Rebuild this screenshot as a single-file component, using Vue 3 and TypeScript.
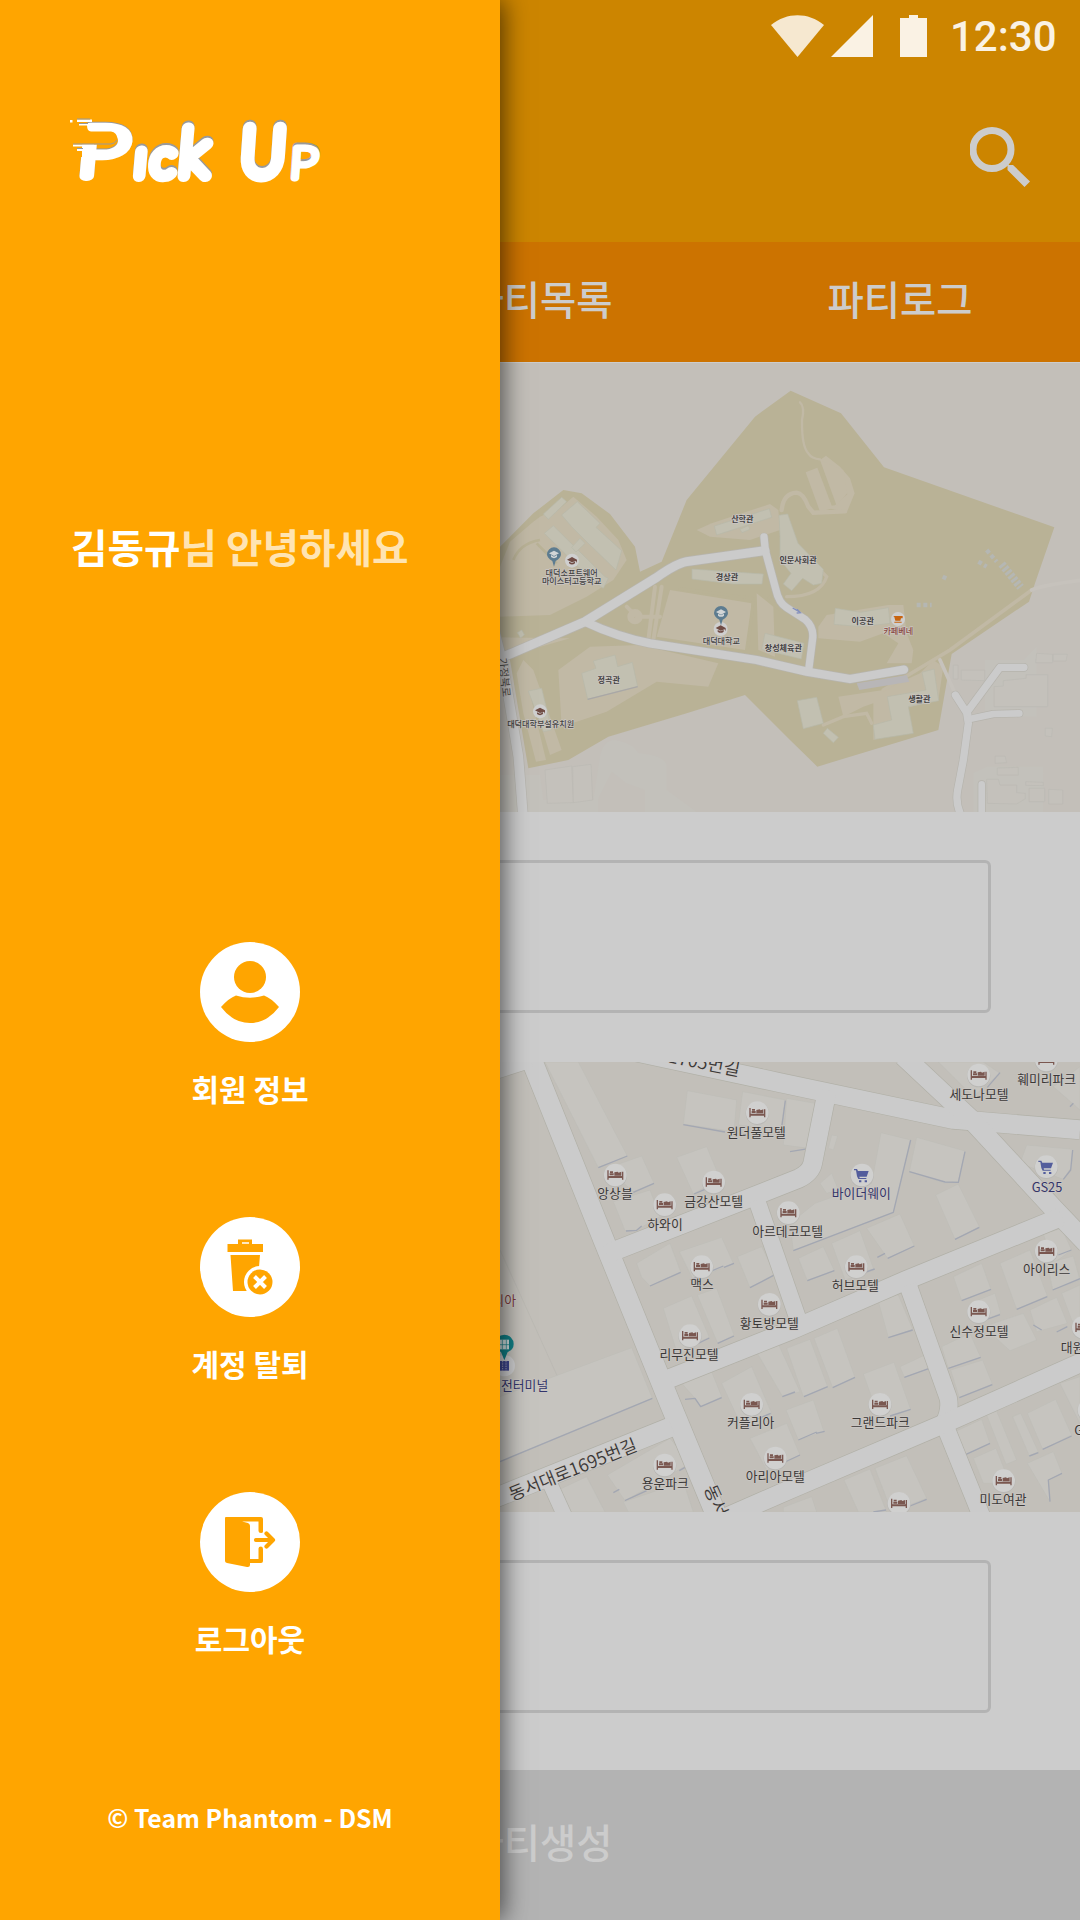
<script setup lang="ts">
interface Label { x: number; y: number; t: string; c?: string; s?: number; r?: number; w?: number }
interface Marker { x: number; y: number; kind: string }

const campusBuildings: string[] = [
  '160,462 215,412 230,425 175,478', '215,465 262,425 330,490 318,502 395,572 378,630 300,555 245,500',
  '163,520 190,497 345,650 355,655 340,685 310,665', '245,562 270,535 285,550 258,576',
  '673,498 838,446 845,472 680,525', '750,508 775,497 780,508 756,518',
  '606,627 820,642 816,672 730,672 606,657', '867,466 893,462 924,550 1000,628 995,670 970,675 938,655 905,692 880,672 903,640 870,600 870,530',
  '1036,745 1112,757 1195,743 1200,790 1115,800 1032,793', '825,820 942,850 934,897 815,868',
  '275,940 318,925 310,903 375,885 383,920 427,907 443,980 293,1018',
  '115,993 155,985 185,1110 160,1115', '1296,937 1332,927 1346,1022 1255,1040 1270,1120 1155,1138 1150,1095 1205,1080 1192,1010 1308,990',
  '922,1022 980,1012 1000,1090 940,1106', '1012,1105 1045,1132 1030,1148 1000,1120', '82,818 95,810 103,824 92,834'
]
const faintBuildings: string[] = [
  '165,1230 245,1218 250,1328 172,1330', '248,1220 303,1213 308,1320 250,1328',
  '1512,980 1540,978 1540,962 1608,955 1608,944 1673,944 1673,1040 1512,1040',
  '1640,880 1688,883 1688,908 1637,908', '1690,883 1732,883 1728,903 1690,903', '1414,930 1484,930 1484,962 1414,960',
  '1490,1258 1525,1258 1530,1275 1580,1275 1580,1298 1606,1300 1606,1316 1580,1332 1492,1330',
  '1617,1285 1664,1285 1664,1325 1617,1325', '1676,1288 1718,1290 1718,1332 1676,1332', '1522,1224 1585,1222 1585,1245 1522,1245',
  '1515,1188 1545,1188 1550,1208 1515,1210', '1607,1265 1660,1267 1660,1277 1607,1276', '1390,915 1404,915 1404,957 1390,957',
  '1666,1105 1687,1105 1685,1130 1666,1128'
]
const campusLabels: Label[] = [
  { x: 245, y: 647, t: '대덕소프트웨어' }, { x: 245, y: 672, t: '마이스터고등학교' }, { x: 694, y: 851, t: '대덕대학교' },
  { x: 152, y: 1101, t: '대덕대학부설유치원' }, { x: 757, y: 486, t: '산학관', w: 700 }, { x: 711, y: 661, t: '경상관', w: 700 },
  { x: 924, y: 609, t: '인문사회관', w: 700 }, { x: 880, y: 872, t: '창성체육관', w: 700 }, { x: 356, y: 968, t: '정곡관', w: 700 },
  { x: 1118, y: 792, t: '이공관', w: 700 }, { x: 1288, y: 1027, t: '생활관', w: 700 }, { x: 1225, y: 822, t: '카페베네', c: '#8b4a42' },
  { x: 42, y: 962, t: '가정북로', r: 84, s: 32, w: 400, c: '#565451' }
]
const campusMarkers: Marker[] = [
  { x: 246, y: 602, kind: 'cap' }, { x: 692, y: 807, kind: 'cap' }, { x: 150, y: 1054, kind: 'cap' }, { x: 1224, y: 777, kind: 'cup' }
]
const campusRoads: { d: string; w: number }[] = [
  { d: 'M-40 925L285 785L500 652Q560 610 590 605L825 572', w: 27 },
  { d: 'M822 531L826 572L858 690Q866 728 890 743L945 778Q972 802 968 835L956 930', w: 22 },
  { d: 'M285 785Q380 830 480 850L800 900L950 935L1080 957L1242 929', w: 25 },
  { d: 'M10 800L40 920L85 1190L100 1380', w: 29 },
  { d: 'M1396 1005L1433 1063M1602 922L1530 922L1430 1058L1435 1090L1420 1200L1403 1290Q1395 1330 1415 1370', w: 22 },
  { d: 'M1588 1060L1510 1062L1435 1078M1475 1273V1370', w: 20 }
]

const townRoads: { d: string; w: number }[] = [
  { d: 'M105 -20L344 577L540 1060L685 1410', w: 62 }, { d: 'M-60 80L120 22', w: 62 },
  { d: 'M440 6L870 98L1390 208L1770 239', w: 57 }, { d: 'M1240 18L1445 210L1690 475L1790 580', w: 58 },
  { d: 'M1012 120L968 340Q962 368 925 386L350 612', w: 56 }, { d: 'M800 450L925 810', w: 50 },
  { d: 'M540 985L900 842L1250 690L1715 500', w: 56 }, { d: 'M1254 705L1375 1045Q1382 1080 1362 1120L1475 1400', w: 52 },
  { d: 'M690 1410L900 1318L1360 1122L1790 930', w: 56 }, { d: 'M545 1130L-30 1362', w: 58 }, { d: 'M175 1290L225 1400', w: 44 }
]
const townBuildings: { p: string; s?: string }[] = [
  { p: '165,36 265,36 412,318 325,353', s: '325,353 412,318' }, { p: '350,355 455,318 492,400 430,425', s: '430,427 492,400' },
  { p: '592,122 740,150 732,245 580,222', s: '580,224 705,246' }, { p: '758,125 886,150 872,240 745,225', s: '886,152 876,225' },
  { p: '560,322 650,290 690,385 610,432', s: '612,432 650,416' }, { p: '370,455 480,420 510,500 440,540 405,542', s: '408,543 440,541 455,528' },
  { p: '440,640 540,580 572,665 480,708 455,682', s: '480,708 572,667' }, { p: '568,605 695,562 730,640 610,690', s: '600,690 700,648 M 702,652 732,640' },
  { p: '742,620 815,590 855,672 780,713', s: '780,713 855,674' }, { p: '520,775 605,738 658,862 560,905', s: '612,886 658,864' },
  { p: '622,735 680,715 732,855 683,880', s: '683,880 732,858' }, { p: '575,1000 665,965 695,1040 632,1070 615,1045', s: '585,1048 615,1045 632,1070 695,1043' },
  { p: '695,1000 785,950 845,1090 760,1140', s: '800,1108 842,1090' }, { p: '802,910 865,882 930,1025 878,1040', s: '877,1040 915,1026' },
  { p: '780,1165 890,1120 930,1215 830,1260', s: '885,1236 930,1215' }, { p: '205,1320 290,1280 345,1386 235,1386' },
  { p: '352,1275 540,1165 600,1240 405,1352', s: '405,1352 470,1322 M 370,1328 388,1318 M 568,1262 585,1252' },
  { p: '400,1356 580,1295 610,1386 415,1386' }, { p: '30,1040 425,893 487,1045 30,1235', s: '30,1235 487,1045' },
  { p: '890,895 960,868 1013,1010 940,1040', s: '942,1040 1013,1010' }, { p: '972,865 1042,835 1095,982 1028,1013', s: '1028,1013 1095,982' },
  { p: '888,1080 970,1050 1002,1145 925,1170', s: '925,1170 980,1146 M 978,1150 1004,1144' },
  { p: '1160,735 1225,735 1268,838 1195,863', s: '1195,863 1268,840' }, { p: '1120,972 1212,937 1262,1078 1170,1112', s: '1200,1098 1262,1078' },
  { p: '1230,950 1305,915 1318,955 1243,982', s: '1243,982 1318,955' }, { p: '1173,248 1262,270 1210,487 910,602 900,520 975,460 1145,400', s: '1262,270 1210,487 910,602' },
  { p: '1280,262 1425,303 1405,395 1365,400 1258,365', s: '1258,365 1365,396 1405,397 1425,305' },
  { p: '1337,435 1405,402 1468,530 1395,568', s: '1395,568 1468,532' }, { p: '1130,535 1230,492 1273,588 1193,625', s: '1193,625 1273,588 M 1162,622 1185,610' },
  { p: '1025,580 1110,542 1152,660 1065,690', s: '1128,666 1154,657' }, { p: '925,625 1000,590 1033,662 952,692', s: '952,692 1033,662' },
  { p: '990,400 1025,370 1045,420 1010,430' }, { p: '1025,255 1043,258 1030,300 1015,295' }, { p: '890,145 975,160 960,295 880,285', s: '975,165 960,295 900,305' },
  { p: '1345,36 1480,36 1530,70 1450,140', s: '1530,68 1492,112' }, { p: '1690,110 1770,50 1770,180', s: '1740,170 1750,160' },
  { p: '1610,285 1748,298 1745,350 1720,388 1590,340', s: '1748,300 1742,360 1720,388' },
  { p: '1660,552 1715,535 1745,600 1690,640', s: '1705,615 1744,600' }, { p: '1530,640 1620,600 1672,738 1580,778', s: '1580,778 1672,740' },
  { p: '1390,680 1475,640 1503,718 1415,752', s: '1415,752 1503,718' }, { p: '1672,640 1750,618 1770,690 1688,720', s: '1688,720 1770,686' },
  { p: '1440,760 1515,730 1532,790 1460,820', s: '1490,808 1530,794' }, { p: '1620,780 1700,742 1732,820 1640,845', s: '1700,846 1732,830 M 1630,825 1655,840' },
  { p: '1715,730 1770,705 1770,840 1745,810' }, { p: '1480,830 1600,790 1640,870 1560,902' }, { p: '1355,890 1440,850 1472,922 1375,955', s: '1375,955 1472,922' },
  { p: '1382,960 1478,930 1507,1002 1408,1043', s: '1408,1043 1507,1004' }, { p: '1395,1145 1475,1108 1500,1180 1420,1217', s: '1420,1217 1500,1180' },
  { p: '1490,1095 1520,1083 1580,1230 1548,1243' }, { p: '1568,1100 1592,1090 1645,1205 1618,1218', s: '1618,1218 1645,1208' },
  { p: '1612,1090 1697,1048 1745,1155 1658,1198', s: '1658,1198 1745,1158' }, { p: '1710,1000 1770,980 1770,1120' },
  { p: '1612,1240 1690,1205 1716,1270 1675,1290 1680,1355', s: '1716,1270 1675,1290 1680,1355' }, { p: '1450,1225 1518,1195 1560,1300 1480,1300' },
  { p: '1155,1255 1250,1217 1310,1345 1205,1386', s: '1260,1368 1310,1348' }, { p: '1062,1290 1140,1257 1190,1386 1105,1386', s: '1150,1386 1188,1380' }, { p: '880,1372 965,1340 980,1386 880,1386' }
]
const townLabels: Label[] = [
  { x: 799, y: 262, t: '원더풀모텔' }, { x: 375, y: 445, t: '앙상블' }, { x: 671, y: 469, t: '금강산모텔' }, { x: 525, y: 538, t: '하와이' },
  { x: 893, y: 558, t: '아르데코모텔' }, { x: 636, y: 718, t: '맥스' }, { x: 838, y: 833, t: '황토방모텔' }, { x: 597, y: 926, t: '리무진모텔' },
  { x: 782, y: 1132, t: '커플리아' }, { x: 856, y: 1292, t: '아리아모텔' }, { x: 526, y: 1315, t: '용운파크' }, { x: 1467, y: 148, t: '세도나모텔' },
  { x: 1670, y: 102, t: '훼미리파크' }, { x: 1114, y: 445, t: '바이더웨이', c: '#33356a' }, { x: 1671, y: 425, t: 'GS25', c: '#33356a' },
  { x: 1096, y: 719, t: '허브모텔' }, { x: 1670, y: 673, t: '아이리스' }, { x: 1467, y: 859, t: '신수정모텔' }, { x: 1783, y: 905, t: '대원모텔' },
  { x: 1171, y: 1132, t: '그랜드파크' }, { x: 1539, y: 1361, t: '미도여관' }, { x: 1799, y: 1155, t: 'GS25' },
  { x: 7, y: 765, t: '롯데리아', c: '#7a3a3a' }, { x: 86, y: 1019, t: '대전터미널', c: '#33356a' },
  { x: 252, y: 1277, t: '동서대로1695번길', r: -22, s: 53, w: 350 }, { x: 544, y: 39, t: '동서대로1705번길', r: 11, s: 54, w: 350 }, { x: 690, y: 1410, t: '동서대로', r: 66, s: 53, w: 350 }
]
const townMarkers: Marker[] = [
  ...[[802, 188], [376, 375], [671, 396], [524, 464], [895, 488], [635, 650], [838, 763], [600, 857], [785, 1063], [856, 1224], [524, 1245],
    [1466, 75], [1669, 30], [1099, 650], [1669, 603], [1466, 785], [1780, 832], [1170, 1063], [1541, 1292], [1227, 1360]
  ].map(([x, y]) => ({ x, y, kind: 'bed' })),
  { x: 1116, y: 375, kind: 'cart' }, { x: 1669, y: 350, kind: 'cart' }, { x: 1797, y: 1080, kind: 'cart' }
]
const rotation = (l: Label) => (l.r ? `rotate(${l.r} ${l.x} ${l.y - 10})` : undefined)
</script>

<template>
  <div class="phone">
    <main class="screen">
      <header class="top">
        <div class="status">
          <svg class="wifi" viewBox="0 0 53 42"><path d="M0 10C16-3 37-3 53 10L26.500 42Z" fill="#f6e8d0" /></svg>
          <svg class="signal" viewBox="0 0 42 42"><path d="M42 0V42H0Z" fill="#faf2e4" /></svg>
          <svg class="battery" viewBox="0 0 27 42"><path d="M0 3H9V0H18V3H27V42H0Z" fill="#faf2e4" /></svg>
          <span class="time">12:30</span>
        </div>
        <svg class="search" viewBox="0 0 60 60">
          <circle cx="22" cy="22.500" r="19" fill="none" stroke="#ccc" stroke-width="7" />
          <path d="M37.500 38V43L54.500 60L60 54.500L43 38H39L36 35L33.500 37.500Z" fill="#ccc" />
        </svg>
      </header>
      <nav class="tabs"><span>파티생성</span><span>파티목록</span><span>파티로그</span></nav>

      <svg class="map campus" viewBox="-1470 9 3240 1347">
        <rect x="-1470" y="0" width="3240" height="1360" fill="#c3bfb9" />
        <g fill="#c3c1bb">
          <path d="M330 1190Q340 1140 375 1140Q430 1150 445 1180Q520 1185 530 1215V1290L620 1356H465V1290L410 1270L365 1235L325 1315V1356H30V1245H150L160 1320H310Z" />
          <path d="M1450 1240L1490 1220H1660V1356H1450ZM1484 900L1600 900L1640 860V1070H1484Z" />
        </g>
        <path d="M30 560L130 460L220 390L275 400L360 462L435 560L450 635L515 605L590 420L795 170L902 92L1053 160L1182 322L1693 502L1635 670L1617 725L1385 882L1345 1110L982 1220L900 1140L765 1005L590 1060L355 1130L235 1200L115 1225L60 900L0 840V590Z" fill="#b9b296" />
        <g fill="#c1b9a5">
          <path d="M30 620V770L180 765L290 710L370 660L410 600L385 540L320 470L250 410L215 440L150 470L130 485L60 545Z" />
          <path d="M205 930L300 860L450 855L685 910L655 980L500 965L350 1055L215 1100Z" />
          <path d="M100 900L130 930L180 1070L215 1170L180 1185L140 1050L120 1000L168 1200L138 1205L100 1060L80 940ZM30 832L240 835L100 875L30 870Z" />
          <path d="M540 690L785 730L765 870L500 830ZM800 700L850 740L855 890L805 870Z" />
          <path d="M620 510L660 530L780 540L870 510L865 450L840 432L665 490Z" />
          <path d="M990 300L1008 287L1050 320L1080 355L1094 400L1070 458L1000 440L1035 436L1072 402Z" />
          <path d="M947 337L982 323L1028 445L990 455Z" />
          <path d="M985 800L1010 765L1195 735L1240 735L1250 820L1270 870L1265 910H1190L1225 850L1180 820L1110 845L985 835Z" />
          <path d="M1045 1010L1180 990L1290 940L1330 900L1360 920L1345 1020L1245 1045L1250 1110L1150 1140V1030L1120 1040L1060 1070Z" />
          <path d="M990 300L1040 437L1072 400L1060 330Z" />
        </g>
        <g fill="none" stroke="#c1b9a5" stroke-linecap="round">
          <path d="M930 127Q945 140 936 180Q935 260 955 280Q965 296 990 298" stroke-width="7" />
          <path d="M875 450Q880 400 920 398Q940 400 955 440L970 458L1065 454" stroke-width="13" />
          <path d="M1180 990L1380 870L1625 690" stroke-width="11" /><path d="M1625 690Q1660 675 1780 660M1350 900L1395 1000" stroke-width="11" stroke="#c6c2bc" />
          <path d="M495 680L475 840M515 680L490 840M410 740L440 770H510" stroke-width="12" /><circle cx="435" cy="770" r="13" stroke-width="20" />
          <path d="M1000 1095L1060 1070L1130 1060L1145 1090M890 710Q990 710 1010 650L990 630" stroke-width="10" />
        </g>
        <path d="M70 600Q90 550 150 540M140 550L200 610M565 685L790 715L775 865M835 710L870 750" fill="none" stroke="#b9b296" stroke-width="8" />
        <path d="M1100 970L1250 945L1258 965L1108 990Z" fill="#b8b6b7" />
        <g fill="#c2c0b1" stroke="#b7b8a9" stroke-width="2"><polygon v-for="p in campusBuildings" :key="p" :points="p" /></g>
        <path d="M293 1018L443 980" stroke="#a9a7a6" stroke-width="4" />
        <g fill="#c4c1bb" stroke="#bbbab4" stroke-width="2"><polygon v-for="p in faintBuildings" :key="p" :points="p" /></g>
        <g fill="none" stroke="#b5b7b3" stroke-width="13"><path d="M1535 612L1592 682" stroke-dasharray="9 5" stroke-width="24" /><path d="M1490 570L1520 605M1465 605L1490 620M1280 735H1325M1358 650L1370 656" stroke-dasharray="12 8" /></g>
        <g fill="none" stroke-linecap="round" stroke-linejoin="round">
          <path v-for="r in campusRoads" :key="'c' + r.d" :d="r.d" stroke="#b6b4ad" :stroke-width="r.w + 4" />
          <path v-for="r in campusRoads" :key="r.d" :d="r.d" stroke="#cbcbcb" :stroke-width="r.w" />
        </g>
        <path d="M908 744L926 754M921 748L931 758L920 759" stroke="#8490bd" stroke-width="4" fill="none" />
        <g v-for="m in campusMarkers" :key="m.x" :transform="`translate(${m.x} ${m.y})`">
          <circle r="21" fill="#cfcfcf" />
          <path v-if="m.kind === 'cap'" d="M-15-3L0-11L15-3V7L12 1L0 5L-15-3ZM-9 3L0 7L9 3V8Q0 15-9 8Z" fill="#704c45" />
          <path v-else d="M-14-9H14V-2H9L7 5H-8L-11-6ZM-11 8H11V11H-11Z" fill="#c8640f" />
        </g>
        <g v-for="p in [[192, 584], [693, 760]]" :key="p[0]" :transform="`translate(${p[0]} ${p[1]})`">
          <path d="M0 36L-5 19Q-21 10-21-1A21 21 0 1 1 21-1Q21 10 5 19Z" fill="#5d7c90" />
          <path d="M-15-4L0-12L15-4L0 4ZM-9 1L0 6L9 1V7Q0 14-9 7Z" fill="#d2d5d6" />
        </g>
        <g class="place">
          <text v-for="l in campusLabels" :key="l.t" :x="l.x" :y="l.y" :font-size="l.s ?? 24.300" :font-weight="l.w ?? 500" :fill="l.c ?? '#444342'" :transform="rotation(l)">{{ l.t }}</text>
        </g>
      </svg>

      <div class="field"></div>

      <svg class="map town" viewBox="-1470 36 3240 1350">
        <rect x="-1470" y="36" width="3240" height="1350" fill="#c2bfb9" />
        <path d="M30 600L205 985L425 895" fill="none" stroke="#b8b6b0" stroke-width="2" />
        <g v-for="b in townBuildings" :key="b.p" stroke-linejoin="round">
          <polygon :points="b.p" fill="#c6c4bf" stroke="#bdbcb7" stroke-width="1.500" />
          <path v-if="b.s" :d="'M' + b.s" fill="none" stroke="#a3a7b2" stroke-width="4" />
        </g>
        <g fill="none" stroke-linejoin="round">
          <path v-for="r in townRoads" :key="'c' + r.d" :d="r.d" stroke="#b1b0a7" :stroke-width="r.w + 4" />
          <path v-for="r in townRoads" :key="r.d" :d="r.d" stroke="#cbcbcb" :stroke-width="r.w" />
        </g>
        <g v-for="m in townMarkers" :key="`${m.x}-${m.y}`" :transform="`translate(${m.x} ${m.y})`">
          <circle cy="2" r="35" fill="#b8b7b4" /><circle r="34" fill="#d0d0cf" />
          <path v-if="m.kind === 'bed'" d="M-24-14H-20V3H20V-10H24V14H20V9H-20V14H-24ZM-17-5H-5V1H-17ZM-16-11H-7V-6H-16ZM-3-8L7-10L10-7L18-10V2H-3Z" fill="#7a5750" />
          <path v-else d="M-24-18H-15L-12-12H20L14 5H-8L-7 9H13V12H-11L-15 4L-18-14H-24ZM-9 16h7v6h-7ZM8 16h7v6H8Z" fill="#535d9c" />
        </g>
        <circle cx="43" cy="947" r="32" fill="#cfcfd0" />
        <path d="M29 933H57V962H29Z" fill="#3f4690" /><path d="M38 933V962M48 933V962" stroke="#cfcfd0" stroke-width="2" stroke-dasharray="4 3" />
        <path d="M43 931L33 906Q15 899 15 882A28 28 0 1 1 71 882Q71 899 53 906Z" fill="#118087" />
        <path d="M29 869H57V898H29Z" fill="#d0dede" /><path d="M37 869V898M49 869V898M29 884H57" stroke="#118087" stroke-width="2" />
        <g class="place">
          <text v-for="l in townLabels" :key="l.t + l.x" :x="l.x" :y="l.y" :font-size="l.s ?? 38.500" :font-weight="l.w ?? 400" :fill="l.c ?? '#3a3837'" :transform="rotation(l)">{{ l.t }}</text>
        </g>
      </svg>

      <div class="field"></div>
      <footer class="create">파티생성</footer>
    </main>

    <aside class="drawer">
      <svg class="logo" viewBox="0 0 260 74" aria-label="Pick Up">
        <g class="mark">
          <g v-for="(c, i) in ['#999', '#fff']" :key="c" :fill="c" :stroke="c" :transform="i ? 'translate(0 .5)' : 'translate(0 -.8)'">
            <text transform="translate(5.500 58.500) skewX(-5) scale(1.340 1)" font-size="69" stroke-width="10">P</text>
            <text transform="translate(64 58) skewX(-5)" font-size="50" stroke-width="12">ı</text>
            <text transform="translate(80 58) skewX(-5)" font-size="50" stroke-width="12">c</text>
            <text transform="translate(107.500 58) skewX(-5)" font-size="66" stroke-width="12">k</text>
            <text transform="translate(169.500 57) skewX(-4) scale(.930 1)" font-size="66" stroke-width="14">U</text>
            <text transform="translate(219 60) skewX(-4) scale(1.150 1)" font-size="43" stroke-width="7">P</text>
          </g>
        </g>
        <path d="M0 0H14V8H17Q17 14.500 21 14.500H41Q47 15.500 47 21Q47 26.500 41 27.500H0Z" fill="#ffa500" />
        <path d="M0 27.500H12V40H0Z" fill="#ffa500" />
        <path d="M7 2.500H22V5H7ZM9 7H20V8.500H9ZM3 27.500H24V29.500H3ZM7 32H16V34H7ZM0 3H2.500V5.500H0Z" fill="#fff" />
        <path d="M7 2H20M9 6.500H18M3 27H41Q45 26.500 47 23M7 31.500H13" fill="none" stroke="#999" stroke-width="1" />
      </svg>

      <p class="greeting"><b>김동규</b><span>님 안녕하세요</span></p>

      <ul class="menu">
        <li>
          <svg viewBox="0 0 100 100"><circle cx="50" cy="50" r="50" fill="#fff" /><circle cx="50" cy="35" r="16" fill="#ffa500" />
            <path d="M36 53.500Q50 58 64 53.500Q71 56 79 65Q67 81 50 81Q33 81 21 65Q29 56 36 53.500Z" fill="#ffa500" /></svg>
          <span>회원 정보</span>
        </li>
        <li>
          <svg viewBox="0 0 100 100"><circle cx="50" cy="50" r="50" fill="#fff" />
            <path d="M27.500 27H38V22.500H52V27H63V35H27.500ZM30.500 38H60L57 74H33Z" fill="#ffa500" /><path d="M42 26H49" stroke="#fff" stroke-width="1.500" />
            <circle cx="60" cy="65" r="16" fill="#fff" /><circle cx="60" cy="65" r="12.500" fill="#ffa500" />
            <path d="M54.500 59.500L65.500 70.500M65.500 59.500L54.500 70.500" stroke="#fff" stroke-width="4" /></svg>
          <span>계정 탈퇴</span>
        </li>
        <li>
          <svg viewBox="0 0 100 100"><circle cx="50" cy="50" r="50" fill="#fff" />
            <path d="M26 25H61Q63 25 63 27V39.500Q63 41 61 41Q58.500 41 58.500 39V29.500H42L48 31Q50 32 50 34V67H58.500V56.500Q58.500 54.500 61 54.500Q63 54.500 63 57V69Q63 71 61 71H50V73Q50 75.500 47 75L27 71Q25 70.500 25 69V26Q25 25 26 25Z" fill="#ffa500" />
            <path d="M56 48H73M66.500 41.500L73 48L66.500 54.500" fill="none" stroke="#ffa500" stroke-width="4.200" stroke-linecap="round" stroke-linejoin="round" /></svg>
          <span>로그아웃</span>
        </li>
      </ul>
      <p class="copy">© Team Phantom - DSM</p>
    </aside>
  </div>
</template>

<style scoped>
.phone { position: relative; width: 1080px; height: 1920px; overflow: hidden; background: #ccc; font-family: "Noto Sans CJK KR", sans-serif; }
.screen { display: flex; flex-direction: column; height: 1920px; }
.top { display: flex; flex-direction: column; align-items: flex-end; height: 242px; background: #cc8500; }
.status { display: flex; align-items: flex-start; height: 57px; padding: 15px 25px 0 0; box-sizing: border-box; }
.wifi { width: 53px; height: 42px; }
.signal { width: 42px; height: 42px; margin-left: 7px; }
.battery { width: 27px; height: 42px; margin-left: 27px; }
.time { width: 105px; margin: 1px 0 0 23px; font: 500 42px/42px Roboto, sans-serif; color: #faf2e4; white-space: nowrap; }
.search { width: 60px; height: 60px; margin: 70px 50px 0 0; }
.tabs { display: flex; height: 120px; margin-bottom: 1px; background: #cc7300; color: #ccc; font-size: 39.400px; font-weight: 500; line-height: 112px; text-align: center; }
.tabs span { flex: 1; }
.map { display: block; width: 1080px; flex: none; }
.campus { height: 449px; }
.town { height: 450px; }
.place { text-anchor: middle; font-family: "Noto Sans CJK KR", sans-serif; }
.place text { stroke: #cbc7c4; stroke-width: 4px; paint-order: stroke; stroke-linejoin: round; }
.field { box-sizing: border-box; flex: none; width: 902px; height: 153px; margin: 48px 0 49px 89px; border: 3px solid #b3b3b3; border-radius: 6px; }
.create { flex: none; height: 150px; margin-top: 8px; background: #b3b3b3; color: #ccc; font-size: 39.400px; font-weight: 500; line-height: 142px; text-align: center; }
.drawer { position: absolute; top: 0; left: 0; display: flex; flex-direction: column; align-items: center; width: 500px; height: 1920px; background: #ffa500; box-shadow: 3px 0 24px rgba(0, 0, 0, .62); color: #fff; }
.logo { align-self: flex-start; width: 260px; height: 74px; margin: 117px 0 0 70px; }
.mark { font-family: Lato, sans-serif; font-weight: 100; stroke-linejoin: round; }
.greeting { align-self: flex-start; margin: 325px 0 0 71px; font-size: 39.700px; line-height: 60px; font-weight: 700; white-space: nowrap; }
.greeting b { font-weight: 700; }
.greeting span { color: #ffe4b2; }
.menu { display: flex; flex-direction: column; gap: 75px; margin: 366px 0 0; padding: 0; list-style: none; }
.menu li { display: flex; flex-direction: column; align-items: center; height: 200px; }
.menu svg { width: 100px; height: 100px; }
.menu span { margin-top: 24px; font-size: 30px; line-height: 44px; font-weight: 700; white-space: nowrap; }
.copy { margin: 107px 0 0; font-size: 24.800px; line-height: 36px; font-weight: 700; white-space: nowrap; }
</style>

<style>
body { margin: 0; }
</style>
